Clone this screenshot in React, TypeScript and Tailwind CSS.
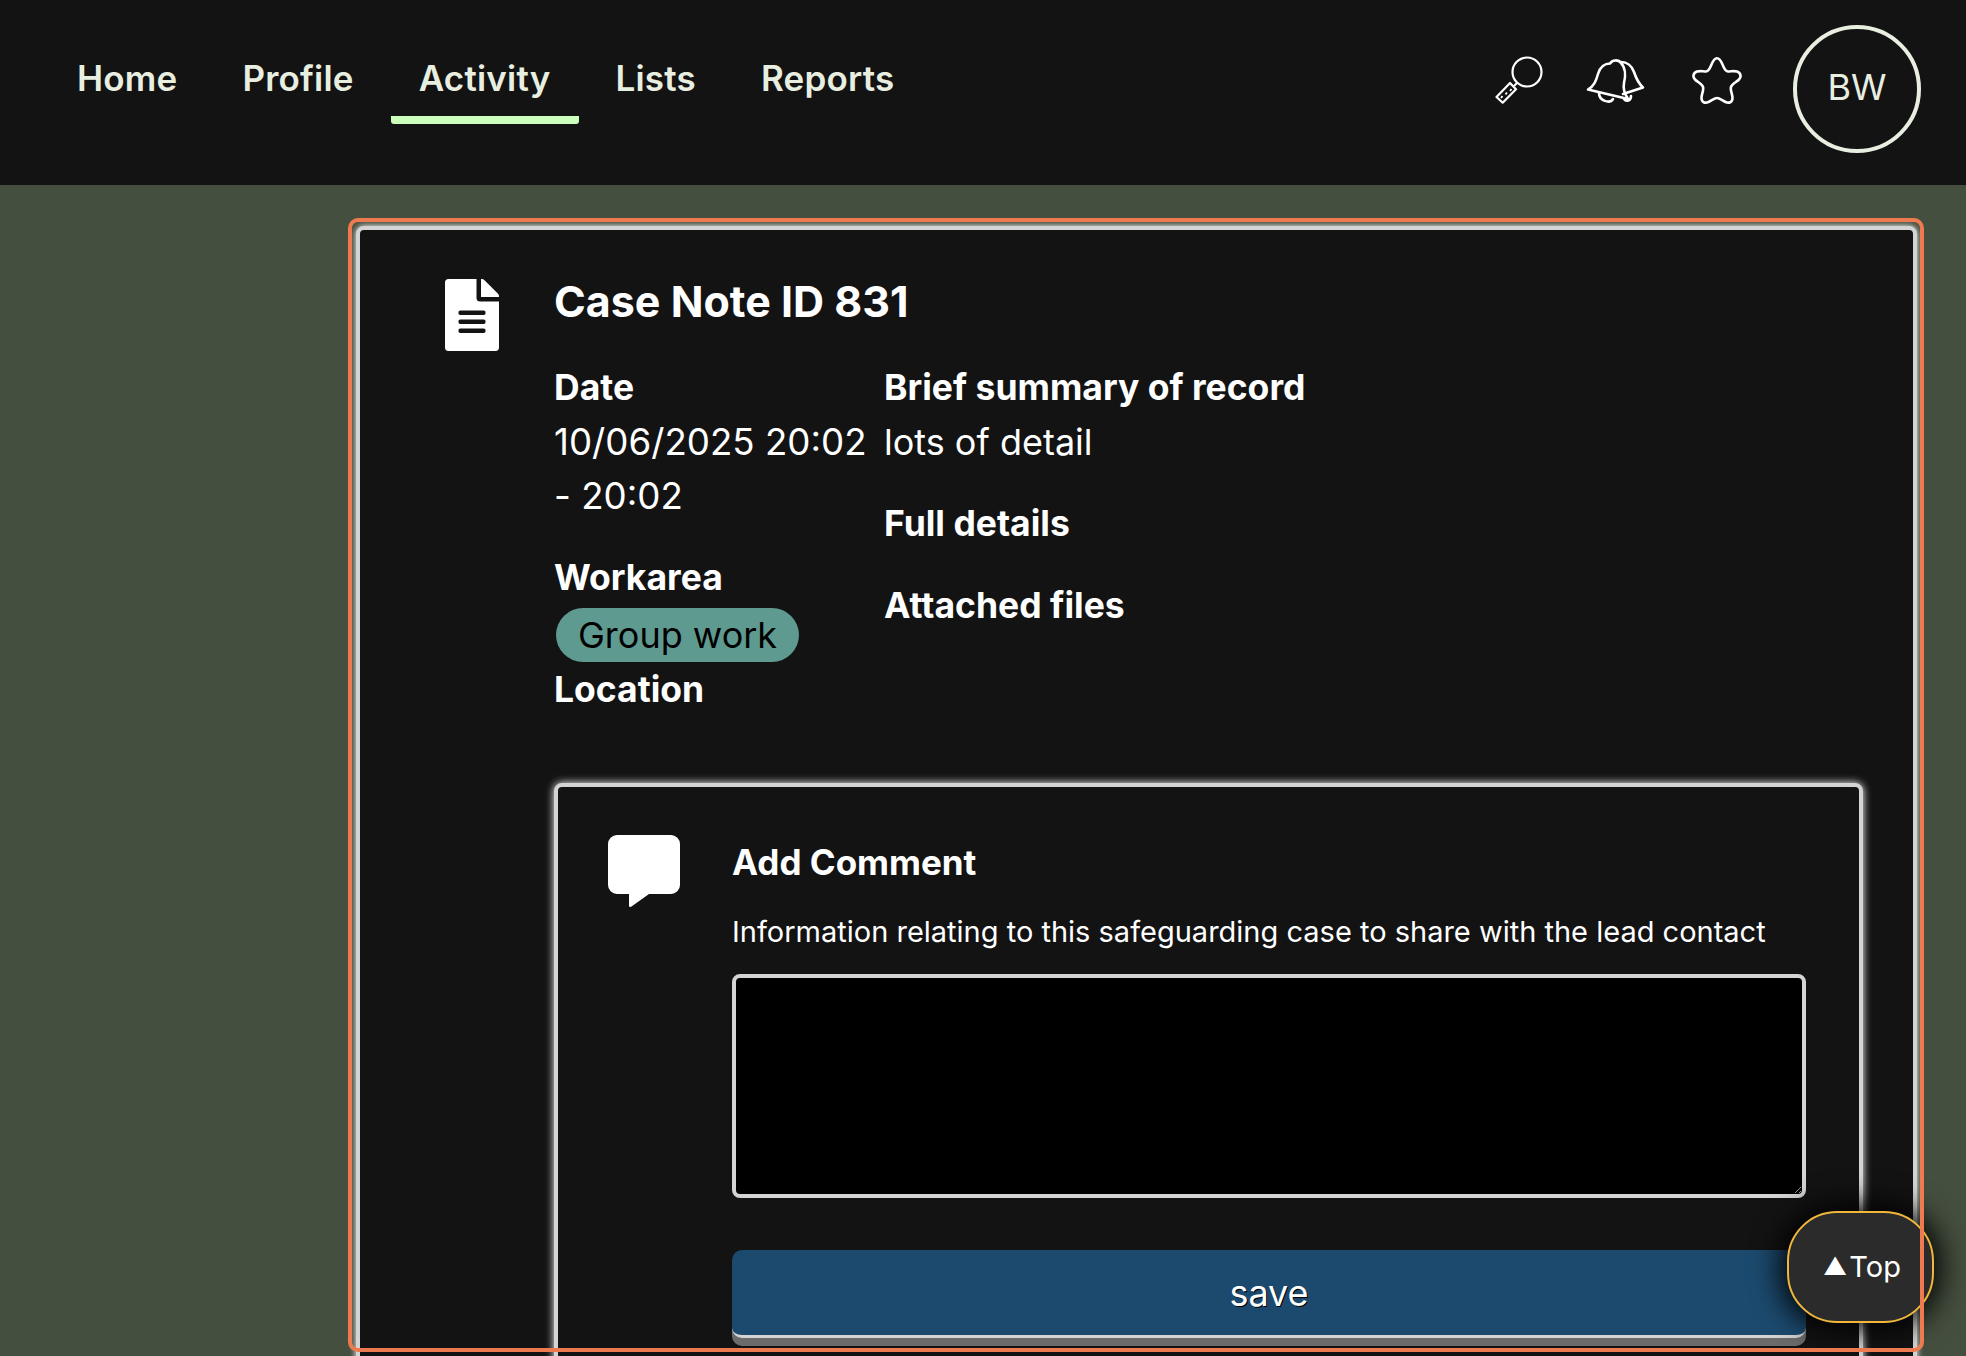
import type { ReactNode } from "react";
import { FaFileAlt } from "react-icons/fa";

const navItems = ["Home", "Profile", "Activity", "Lists", "Reports"];

function SearchIcon() {
  return (
    <svg width="50" height="50" viewBox="0 0 50 50" fill="none" stroke="#fff" strokeWidth="2.2">
      <circle cx="32" cy="17" r="14.500" />
      <path d="M19 31l3-3" />
      <path d="M1.500 42l6.200 5.700L21 34.300 15 28z" strokeLinejoin="round" />
      <path d="M6 41.500l1.500 1M10.500 38l1.500 1M15 34.500l1.500 1" strokeWidth="2.400" />
    </svg>
  );
}

function BellsIcon() {
  return (
    <svg width="66" height="50" viewBox="0 0 66 50" fill="none" stroke="#fff" strokeWidth="2.600" strokeLinejoin="round" strokeLinecap="round">
      <path d="M8 34.500C14 31 16 26 18 19 20 12 25 8.500 30 8.500 32 5 38 4 41 8 45 12 46 20 44 28 43 33 44 38 48 44Z" />
      <path d="M41 7C47 7 52 11 54 17 56 23 58 28 63 32.500L43 39" />
      <path d="M19 38c0 8 11 11 14 6" />
      <path d="M44 44c2 3 7 2 7-3" />
    </svg>
  );
}

function StarIcon() {
  return (
    <svg width="50" height="49" viewBox="0 0 50 49" fill="none" stroke="#fff" strokeWidth="2.600" strokeLinejoin="round">
      <path d="M25 2.300C27.500 2.300 29 5 30.500 8.500 32 12 33 15.500 36 15.500 39 15.500 42 14.500 45 15.500 49 17 49.500 21 47 23.500 44.500 26 40 28 39 31 38 34 40.500 38 40.500 42 40.500 46.500 37 47.500 33.500 46 30.500 44.700 27.500 42 25 42 22.500 42 19.500 44.700 16.500 46 13 47.500 9.500 46.500 9.500 42 9.500 38 12 34 11 31 10 28 5.500 26 3 23.500 .5 21 1 17 5 15.500 8 14.500 11 15.500 14 15.500 17 15.500 18 12 19.500 8.500 21 5 22.500 2.300 25 2.300Z" />
    </svg>
  );
}

function CommentIcon() {
  return (
    <svg width="72" height="72" viewBox="0 0 72 72" fill="#fff" className="shrink-0">
      <path d="M9 0h54a9 9 0 0 1 9 9v41a9 9 0 0 1-9 9H41L23.500 71.500c-1.500 1-2.500.5-2.500-1V59H9a9 9 0 0 1-9-9V9a9 9 0 0 1 9-9z" />
    </svg>
  );
}

function Field({ label, children }: { label: string; children?: ReactNode }) {
  return (
    <div className="mb-[28px]">
      <h3 className="text-[35.500px] leading-[54px] font-bold text-white">{label}</h3>
      {children}
    </div>
  );
}

export default function App() {
  return (
    <div
      className="h-screen overflow-hidden bg-[#454f3f] text-white"
      style={{ fontFamily: "Inter, 'Liberation Sans', sans-serif" }}
    >
      <header className="flex h-[185px] items-start justify-between bg-[#131313] pl-[77px] pr-[45px]">
        <nav className="flex gap-[65px] pt-[53px]">
          {navItems.map((item) => (
            <a
              key={item}
              className={
                item === "Activity"
                  ? "-mx-[28px] rounded-b-[3px] border-b-[8px] border-[#ccffbb] px-[28px] pb-[13px] text-[35px] leading-[50px] font-semibold tracking-[0.2px] text-[#e8efe0]"
                  : "text-[35px] leading-[50px] font-semibold tracking-[0.2px] text-[#e8efe0]"
              }
            >
              {item}
            </a>
          ))}
        </nav>
        <div className="flex items-start pt-[25px]">
          <div className="mt-[30px] mr-[51px] flex items-start gap-[35px]">
            <SearchIcon />
            <BellsIcon />
            <div className="ml-[11px] pt-[1px]">
              <StarIcon />
            </div>
          </div>
          <div className="flex h-[128px] w-[128px] items-center justify-center rounded-full border-[4px] border-[#e8efe0] pb-[4px] text-[36px] text-[#e8efe0]">
            BW
          </div>
        </div>
      </header>

      <main className="relative mt-[37px] ml-[352px] h-[1126px] w-[1568px] pt-[4px] pl-[4px]">
        <section className="h-[1400px] w-[1561px] rounded-[8px] border-[4px] border-[#d4d4d4] bg-[#131313] shadow-[0_0_6px_#fff]">
          <div className="flex pt-[44px] pl-[85px]">
            <FaFileAlt className="mt-[5px] h-[72px] w-[54px] shrink-0 text-white" />
            <div className="ml-[55px] flex-1">
              <h2 className="text-[43px] leading-[54px] font-bold">Case Note ID 831</h2>
              <div className="mt-[33px] flex">
                <div className="w-[330px] shrink-0">
                  <div className="text-[35.500px] leading-[54px] font-bold">Date</div>
                  <div className="text-[36.700px] leading-[54px]">10/06/2025 20:02 - 20:02</div>
                  <div className="mt-[28px] text-[35.500px] leading-[54px] font-bold">Workarea</div>
                  <span className="mt-[3px] ml-[2px] inline-block rounded-full bg-[#5f9a90] px-[22px] text-[36px] leading-[54px] text-black">
                    Group work
                  </span>
                  <div className="mt-[1px] text-[35.500px] leading-[54px] font-bold">Location</div>
                </div>
                <div>
                  <Field label="Brief summary of record">
                    <p className="text-[36px] leading-[54px]">lots of detail</p>
                  </Field>
                  <Field label="Full details" />
                  <Field label="Attached files" />
                </div>
              </div>

              <div className="mt-[66px] mr-[50px] h-[900px] rounded-[8px] border-[4px] border-[#d4d4d4] bg-[#131313] pt-[48px] pr-[53px] pl-[50px] shadow-[0_0_8px_#fff]">
                <div className="flex">
                  <CommentIcon />
                  <div className="ml-[52px] flex-1">
                    <h3 className="text-[35px] leading-[54px] font-bold">Add Comment</h3>
                    <p className="mt-[16px] text-[29px] leading-[54px]">
                      Information relating to this safeguarding case to share with the lead contact
                    </p>
                    <textarea className="mt-[15px] block h-[224px] w-full rounded-[8px] border-[4px] border-[#d4d4d4] bg-black" />
                    <button
                      type="button"
                      className="mt-[52px] h-[88px] w-full rounded-[10px] border-b-[3px] border-[#d4d4d4] bg-[#1c4a6e] text-[36px] text-white shadow-[0_8px_0_#6b6b6b] [text-shadow:1px_1px_0_#000]"
                    >
                      save
                    </button>
                  </div>
                </div>
              </div>
            </div>
          </div>
        </section>
        <button
          type="button"
          className="absolute right-[-14px] bottom-[25px] flex h-[112px] w-[147px] items-center justify-center gap-[2px] rounded-[50px] border-[2px] border-[#f0b73a] bg-[#2b2b2b] pl-[3px] text-[29px] text-white shadow-[0_0_30px_6px_#000]"
        >
          <span className="text-[24px]">▲</span>Top
        </button>
        <div className="pointer-events-none absolute inset-0 rounded-[6px] outline-[4px] outline-[#ee7b50]" />
      </main>
    </div>
  );
}
